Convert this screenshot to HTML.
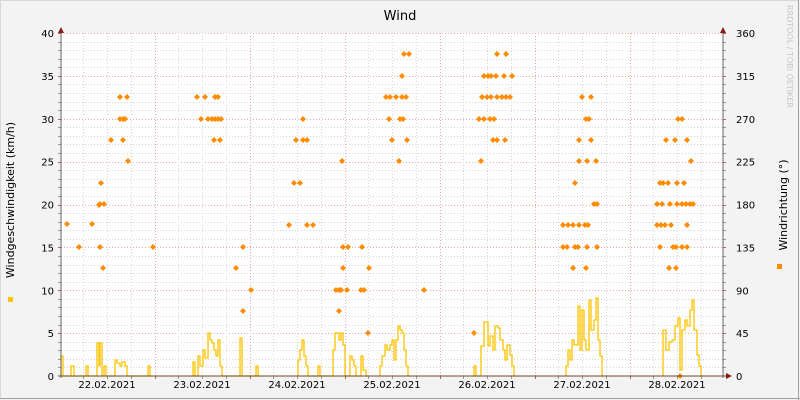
<!DOCTYPE html>
<html><head><meta charset="utf-8"><style>
html,body{margin:0;padding:0;width:800px;height:400px;overflow:hidden;background:#f3f3f3}
svg{display:block;font-family:"DejaVu Sans","Liberation Sans",sans-serif}
</style></head><body>
<svg id="s" width="800" height="400" xmlns="http://www.w3.org/2000/svg">
<rect x="0" y="0" width="800" height="400" fill="#f3f3f3"/>
<rect x="0.5" y="0.5" width="798" height="398" fill="none" stroke="#d8d8d8"/>
<line x1="0" y1="398.5" x2="800" y2="398.5" stroke="#a0a0a0"/>
<line x1="798.5" y1="0" x2="798.5" y2="400" stroke="#a0a0a0"/>
<rect x="61" y="33" width="662" height="343" fill="#fff"/>
<g id="grid"></g>
<g id="bars" fill="none" stroke="#ffc400" stroke-width="1.3"></g>
<g id="dots" fill="#ff8c00"></g>
<line x1="61" y1="30" x2="61" y2="378" stroke="#666"/>
<line x1="723" y1="30" x2="723" y2="378" stroke="#666"/>
<line x1="58" y1="376" x2="727" y2="376" stroke="#6a4a2a"/>
<polygon points="58,33 64,33 61,27" fill="#8b1a1a"/>
<polygon points="720,33 726,33 723,27" fill="#8b1a1a"/>
<polygon points="726,373 726,379 732,376" fill="#8b1a1a"/>
<text x="400" y="20" font-size="13" text-anchor="middle" fill="#000">Wind</text>
<g id="lab" font-size="10" fill="#000"></g>
<text transform="translate(14,200) rotate(-90)" font-size="11" text-anchor="middle">Windgeschwindigkeit (km/h)</text>
<text transform="translate(787,205) rotate(-90)" font-size="11" text-anchor="middle">Windrichtung (°)</text>
<text transform="translate(787,5) rotate(90)" font-size="8" fill="#c8c8c8">RRDTOOL / TOBI OETIKER</text>
<rect x="8" y="297" width="5" height="5" fill="#ffc400"/>
<rect x="777" y="264" width="5" height="5" fill="#ff8c00"/>
</svg>
<script>
var NS="http://www.w3.org/2000/svg";
function el(p,t,a,txt){var e=document.createElementNS(NS,t);for(var k in a)e.setAttribute(k,a[k]);if(txt)e.textContent=txt;document.getElementById(p).appendChild(e);}
function Y(v){return 376-v*8.575;}
for(var v=1;v<=40;v++){var y=Math.round(Y(v))+0.5;el("grid","line",{x1:61,x2:723,y1:y,y2:y,stroke:v%5==0?"#e8a8a8":"#d6d6d6","stroke-dasharray":"1,2"});
 el("grid","line",{x1:58,x2:61,y1:y,y2:y,stroke:v%5==0?"#c06060":"#999"});el("grid","line",{x1:723,x2:726,y1:y,y2:y,stroke:v%5==0?"#c06060":"#999"});}
for(var i=1;i<28;i++){var x=Math.round(59.5+i*23.75)+0.5;if(x>722)break;el("grid","line",{x1:x,x2:x,y1:33,y2:376,stroke:i%4==0?"#e8a8a8":"#d6d6d6","stroke-dasharray":"1,2"});el("grid","line",{x1:x,x2:x,y1:376,y2:379,stroke:i%4==0?"#c06060":"#999"});}
for(var v=0;v<=40;v+=5){el("lab","text",{x:54,y:Y(v)+4,"text-anchor":"end"},String(v));el("lab","text",{x:736,y:Y(v)+4},String(v*9));}
var d=["22","23","24","25","26","27","28"];
for(var i=0;i<7;i++)el("lab","text",{x:107+i*95,y:388,"text-anchor":"middle"},d[i]+".02.2021");
var P=[[67,224],[79,247],[92,224],[99,205],[101,183],[100,204],[104,204],[100,247],[103,268],[111,140],[120,119],[123,119],[125,119],[120,97],[127,97],[123,140],[128,161],[153,247],
[197,97],[205,97],[215,97],[218,97],[201,119],[208,119],[212,119],[215,119],[218,119],[221,119],[214,140],[220,140],[236,268],[243,247],[243,311],[251,290],
[289,225],[294,183],[300,183],[296,140],[303,140],[307,140],[303,119],[307,225],[313,225],[342,161],[343,247],[348,247],[343,268],[339,290],[336,290],[341,290],[347,290],[339,311],[362,247],[361,290],[364,290],[369,268],[368,333],
[386,97],[390,97],[396,97],[402,97],[406,97],[389,119],[400,119],[403,119],[392,140],[407,140],[402,76],[404,54],[409,54],[399,161],[424,290],
[474,333],[481,161],[479,119],[484,119],[490,119],[494,119],[482,97],[487,97],[491,97],[497,97],[502,97],[506,97],[484,76],[488,76],[491,76],[496,76],[504,76],[512,76],[497,54],[506,54],[493,140],[497,140],[505,140],[510,97],
[582,97],[591,97],[586,119],[589,119],[579,140],[591,140],[579,161],[587,161],[596,161],[575,183],[594,204],[597,204],[563,225],[568,225],[573,225],[579,225],[585,225],[588,225],[563,247],[567,247],[575,247],[578,247],[587,247],[597,247],[573,268],[586,268],
[678,119],[682,119],[666,140],[675,140],[687,140],[660,183],[663,183],[668,183],[677,183],[684,183],[657,204],[662,204],[670,204],[677,204],[682,204],[686,204],[690,204],[693,204],[657,225],[661,225],[665,225],[671,225],[687,225],[660,247],[673,247],[676,247],[682,247],[687,247],[669,268],[676,268],[691,161],[680,376]];
P.forEach(function(p){el("dots","polygon",{points:(p[0]-3)+","+p[1]+" "+p[0]+","+(p[1]-3)+" "+(p[0]+3)+","+p[1]+" "+p[0]+","+(p[1]+3)});});
// bars: [x, topY]
var B=[[[61,356],[63,376],[71,366],[74,376],[86,366],[88,376],[97,343],[99,366],[100,343],[102,376],[104,366],[106,376],[115,360],[117,363],[120,366],[122,362],[125,366],[127,376],[148,366],[150,376]],
[[193,362],[195,376],[198,356],[200,366],[203,350],[205,358],[208,333],[210,340],[212,343],[214,350],[216,356],[218,340],[220,366],[222,376],[240,338],[242,376],[256,366],[258,376]],
[[298,360],[300,350],[302,340],[304,356],[306,366],[308,376],[318,366],[320,376],[333,350],[335,333],[337,333],[339,340],[341,333],[343,345],[345,376],[350,356],[352,360],[354,366],[356,376],[361,356],[363,370],[366,376]],
[[380,366],[382,356],[385,345],[387,350],[390,345],[392,340],[394,360],[396,340],[398,326],[400,330],[402,333],[404,350],[406,366],[408,376]],
[[472,376],[474,366],[476,376],[481,346],[484,322],[488,346],[490,336],[493,350],[495,326],[498,328],[500,340],[503,350],[505,360],[507,345],[510,355],[512,366],[514,376]],
[[566,366],[568,350],[570,360],[572,340],[574,345],[578,306],[580,350],[582,310],[584,340],[586,350],[589,300],[591,330],[594,320],[596,298],[598,340],[600,356],[602,376]],
[[663,330],[666,350],[669,342],[672,340],[675,326],[678,318],[680,370],[682,330],[685,320],[687,326],[690,310],[692,300],[694,330],[697,355],[699,366],[701,376]]];
B.forEach(function(s){var x=s[0][0],d="M"+x+" 376";s.forEach(function(p){d+=" H"+p[0]+" V"+p[1];});d+=" H"+(s[s.length-1][0]+2)+" V376";el("bars","path",{d:d});});
</script>
</body></html>
